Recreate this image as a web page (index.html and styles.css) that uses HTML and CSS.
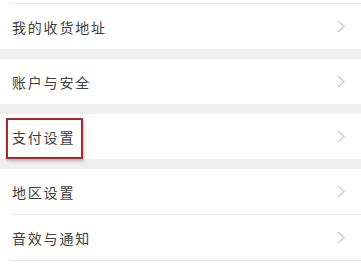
FILE: index.html
```html
<!DOCTYPE html>
<html lang="zh">
<head>
<meta charset="utf-8">
<link rel="stylesheet" href="styles.css">
</head>
<body>
<div class="page">
  <div class="group first">
    <div class="row"><span class="label">我的收货地址</span><svg class="chev" viewBox="0 0 8 13"><polyline points="1,1 7,6.5 1,12"/></svg></div>
  </div>
  <div class="group">
    <div class="row"><span class="label">账户与安全</span><svg class="chev" viewBox="0 0 8 13"><polyline points="1,1 7,6.5 1,12"/></svg></div>
  </div>
  <div class="group">
    <div class="row highlight"><span class="label">支付设置</span><svg class="chev" viewBox="0 0 8 13"><polyline points="1,1 7,6.5 1,12"/></svg><span class="mark"></span></div>
  </div>
  <div class="group last">
    <div class="row line"><span class="label">地区设置</span><svg class="chev" viewBox="0 0 8 13"><polyline points="1,1 7,6.5 1,12"/></svg></div>
    <div class="row line"><span class="label">音效与通知</span><svg class="chev" viewBox="0 0 8 13"><polyline points="1,1 7,6.5 1,12"/></svg></div>
  </div>
</div>
</body>
</html>
```
FILE: styles.css
```css
html, body {
  margin: 0;
  padding: 0;
  background: #efefef;
  width: 361px;
  height: 266px;
  overflow: hidden;
}
.page {
  display: flex;
  flex-direction: column;
  gap: 10px;
  height: 266px;
  font-family: "Noto Sans CJK SC", "Noto Sans", sans-serif;
}
.group {
  background: #fff;
  padding-left: 10px;
}
.group.last {
  flex-grow: 1;
}
.group.first {
  padding-top: 3px;
  position: relative;
}
.group.first::before {
  content: "";
  position: absolute;
  left: 10px;
  right: 0;
  top: 3px;
  height: 1px;
  background: #ececec;
}
.group.first .row {
  margin-top: 1px;
}
.row {
  height: 45px;
  display: flex;
  align-items: center;
  justify-content: space-between;
  padding-left: 2px;
  padding-right: 16px;
  position: relative;
}
.row.line {
  border-bottom: 1px solid #e8e8e8;
}
.label {
  font-size: 14px;
  letter-spacing: 1.8px;
  color: #404040;
}
.chev {
  width: 8px;
  height: 13px;
  fill: none;
  stroke: #cacaca;
  stroke-width: 1.3;
}
.mark {
  position: absolute;
  left: -4px;
  top: 4px;
  width: 73px;
  height: 37px;
  border: 2px solid #a52a2e;
  box-shadow: 1px 2px 3px rgba(0,0,0,0.25);
}
```
